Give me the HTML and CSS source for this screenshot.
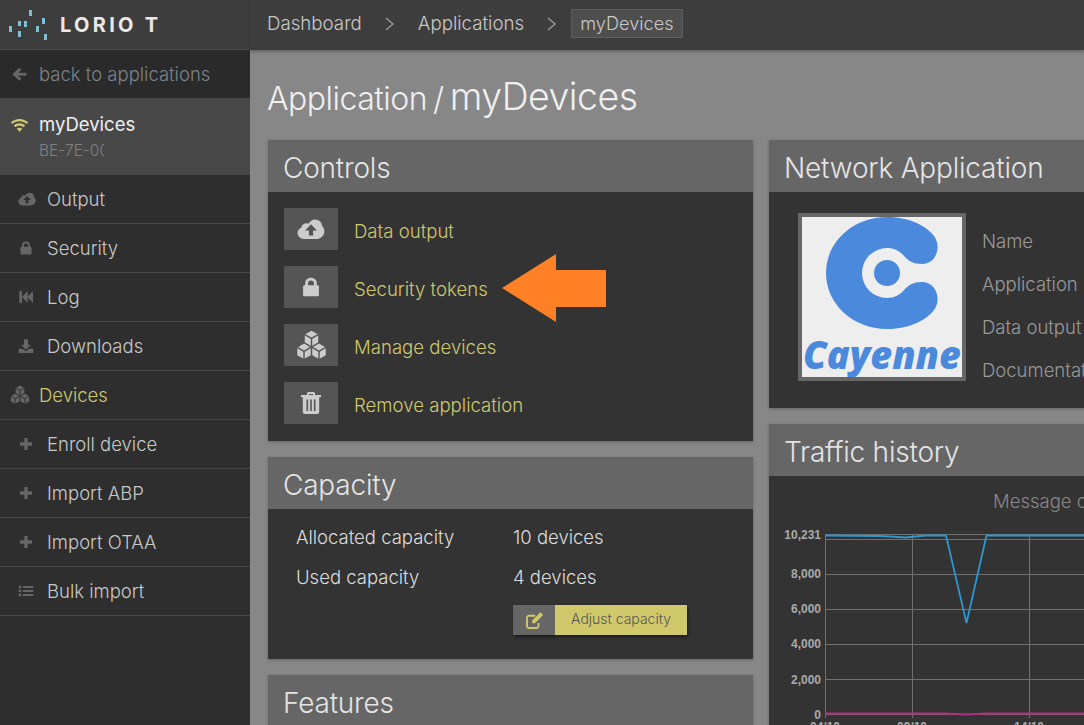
FILE: index.html
```html
<!DOCTYPE html>
<html>
	<head>
		<title>LORIOT - myDevices</title>
		<meta charset="utf-8" />
		<link rel="stylesheet" href="styles.css">
	</head>
<body>
	<svg class="defs" width="0" height="0">
		<symbol id="i-cloud" viewBox="0 0 24 24"><path fill-rule="evenodd" d="M6 20.500C3 20.500 .5 18.300 .5 15.500c0-2.200 1.300-4 3.300-4.800C4 8.500 5.800 7 8 7c.7 0 1.300.1 1.900.4C11 5.300 13.200 3.800 15.500 3.800c3.400 0 6 2.600 6.100 5.900 1.200.9 1.900 2.500 1.900 4.300 0 3.600-2.900 6.500-6.500 6.500H6zM12 8l-5 5.200h3.200v4.300h3.600v-4.300H17L12 8z"/></symbol>
		<symbol id="i-lock" viewBox="0 0 24 24"><path fill-rule="evenodd" d="M5 10V7.500C5 3.700 8 1 12 1s7 2.700 7 6.500V10h1a1.500 1.500 0 0 1 1.500 1.500v10A1.500 1.500 0 0 1 20 23H4a1.500 1.500 0 0 1-1.500-1.500v-10A1.500 1.500 0 0 1 4 10h1zm3.500 0h7V7.500C15.500 5.600 14 4.300 12 4.300S8.500 5.600 8.500 7.500V10z"/></symbol>
		<symbol id="i-back" viewBox="0 0 24 24"><path d="M2 3h4v18H2zM6 12l8.500-9v18zM14 12l8.500-9v18z"/></symbol>
		<symbol id="i-download" viewBox="0 0 24 24"><path d="M9 2h6v8h4.500L12 17.500 4.500 10H9zM1 16h6l5 4 5-4h6v6.500H1z"/></symbol>
		<symbol id="i-cubes" viewBox="0 0 24 24">
			<path d="M12 .5l5.200 3v6L12 12.500l-5.200-3v-6zM6.200 10.500l5.200 3v6l-5.200 3-5.200-3v-6zM17.800 10.500l5.200 3v6l-5.200 3-5.200-3v-6z"/>
			<path fill="none" stroke="var(--cube-line)" stroke-width="1.100" d="M6.800 3.500L12 6.500l5.200-3M12 6.500v6M1 13.500l5.200 3 5.200-3M6.200 16.500v6M12.600 13.500l5.200 3 5.200-3M17.800 16.500v6"/>
		</symbol>
		<symbol id="i-plus" viewBox="0 0 24 24"><path d="M9.500 3h5v6.500H21v5h-6.500V21h-5v-6.500H3v-5h6.500z"/></symbol>
		<symbol id="i-list" viewBox="0 0 24 24"><path d="M1 4h4v4H1zM7.500 4.500H23v3H7.500zM1 10h4v4H1zM7.500 10.500H23v3H7.500zM1 16h4v4H1zM7.500 16.500H23v3H7.500z"/></symbol>
		<symbol id="i-arrow" viewBox="0 0 24 24"><path d="M12.500 2.500l3 3L11 10h12v4.500H11l4.500 4.500-3 3L2 12.200z"/></symbol>
		<symbol id="i-wifi" viewBox="0 0 24 24"><path d="M12 5c4.300 0 8 1.600 11 4.300l-2.100 2.200C18.500 9.300 15.400 8 12 8s-6.500 1.300-8.900 3.500L1 9.300C4 6.600 7.700 5 12 5zM12 10.500c2.800 0 5.300 1 7.200 2.800l-2.100 2.100C15.700 14.200 13.900 13.500 12 13.500s-3.700.7-5.100 1.900l-2.100-2.100c1.900-1.800 4.400-2.800 7.200-2.800zM12 16c1.400 0 2.600.5 3.500 1.300L12 21l-3.500-3.700c.9-.8 2.100-1.300 3.500-1.300z"/></symbol>
		<symbol id="i-trash" viewBox="0 0 24 24"><path fill-rule="evenodd" d="M8 4V2.500A1.500 1.500 0 0 1 9.500 1h5A1.500 1.500 0 0 1 16 2.500V4h6v2.200h-1.800V21a2 2 0 0 1-2 2H5.800a2 2 0 0 1-2-2V6.200H2V4h6zm2 0h4V3h-4v1zM7.500 8.500v11.500h1.600V8.500H7.500zm3.700 0v11.500h1.600V8.500h-1.600zm3.700 0v11.500h1.600V8.500h-1.600z"/></symbol>
		<symbol id="i-edit" viewBox="0 0 24 24"><path fill="none" stroke="currentColor" stroke-width="2.400" d="M17 15v4a2.500 2.500 0 0 1-2.500 2.500H5A2.500 2.500 0 0 1 2.500 19V8.500A2.500 2.500 0 0 1 5 6h8"/><path d="M19.500 1.500l3.500 3.500-10.500 10.500H9V12z"/></symbol>
	</svg>

	<div id="app">
		<aside class="sidebar">
			<div class="brand">
				<svg class="brand-dots" width="46" height="32" viewBox="0 0 46 32">
					<rect x="0" y="17" width="3" height="6"/><rect x="9" y="12" width="3" height="5"/><rect x="15" y="12" width="3" height="6"/><rect x="9" y="22" width="3" height="6"/><rect x="20" y="1" width="3" height="6"/><rect x="27" y="17" width="3" height="6"/><rect x="33" y="9" width="3" height="6"/><rect x="35" y="25" width="3" height="6"/>
				</svg>
				<span class="brand-name">LORIO T</span>
			</div>
			<a class="back"><svg class="ico"><use href="#i-arrow"/></svg>back to applications</a>
			<div class="current">
				<div class="current-name"><svg class="ico"><use href="#i-wifi"/></svg>myDevices</div>
				<div class="current-eui">BE-7E-00</div>
			</div>
			<nav>
				<a class="nav-item"><svg class="ico wide"><use href="#i-cloud"/></svg>Output</a>
				<a class="nav-item"><svg class="ico small"><use href="#i-lock"/></svg>Security</a>
				<a class="nav-item"><svg class="ico"><use href="#i-back"/></svg>Log</a>
				<a class="nav-item"><svg class="ico"><use href="#i-download"/></svg>Downloads</a>
				<a class="nav-item section"><svg class="ico"><use href="#i-cubes"/></svg>Devices</a>
				<a class="nav-item"><svg class="ico"><use href="#i-plus"/></svg>Enroll device</a>
				<a class="nav-item"><svg class="ico"><use href="#i-plus"/></svg>Import ABP</a>
				<a class="nav-item"><svg class="ico"><use href="#i-plus"/></svg>Import OTAA</a>
				<a class="nav-item"><svg class="ico"><use href="#i-list"/></svg>Bulk import</a>
			</nav>
		</aside>

		<div class="page">
			<header class="topbar">
				<span>Dashboard</span>
				<svg class="crumb-sep" width="10" height="14" viewBox="0 0 10 14"><path d="M1 1l7 6-7 6"/></svg>
				<span>Applications</span>
				<svg class="crumb-sep" width="10" height="14" viewBox="0 0 10 14"><path d="M1 1l7 6-7 6"/></svg>
				<span class="crumb-now">myDevices</span>
			</header>
			<main class="content">
				<h1 class="title"><span class="title-small">Application</span><span class="title-small">/</span><span>myDevices</span></h1>
				<div class="columns">
					<div class="col">
						<section class="panel">
							<h2>Controls</h2>
							<div class="panel-body controls">
								<a class="control"><span class="control-ico"><svg class="ico cloud"><use href="#i-cloud"/></svg></span><span class="control-text">Data output</span></a>
								<a class="control"><span class="control-ico"><svg class="ico lock"><use href="#i-lock"/></svg></span><span class="control-text">Security tokens</span></a>
								<a class="control"><span class="control-ico"><svg class="ico cubes"><use href="#i-cubes"/></svg></span><span class="control-text">Manage devices</span></a>
								<a class="control"><span class="control-ico"><svg class="ico"><use href="#i-trash"/></svg></span><span class="control-text">Remove application</span></a>
								<svg class="callout" width="106" height="70" viewBox="0 0 106 70"><path d="M1 35L55 1v16h50v37H55v15z"/></svg>
							</div>
						</section>
						<section class="panel">
							<h2>Capacity</h2>
							<div class="panel-body capacity">
								<div class="cap-row"><span>Allocated capacity</span><span>10 devices</span></div>
								<div class="cap-row"><span>Used capacity</span><span>4 devices</span></div>
								<a class="btn"><span class="btn-ico"><svg class="ico"><use href="#i-edit"/></svg></span><span class="btn-text">Adjust capacity</span></a>
							</div>
						</section>
						<section class="panel">
							<h2>Features</h2>
						</section>
					</div>
					<div class="col">
						<section class="panel">
							<h2>Network Application</h2>
							<div class="panel-body netapp">
								<div class="logo">
									<svg width="160" height="160" viewBox="802 217 160 160">
										<path d="M887 217C906 217 925 224 934 236C942 247 936 264 922 264C913 264 909 261 905 257C900 251 894 248 887 248A25 25 0 0 0 887 298C894 298 900 295 905 289C909 285 913 282 922 282C936 282 942 299 934 310C925 322 906 329 887 329C853 329 826 304 826 273C826 242 853 217 887 217Z"/>
										<circle cx="887" cy="273" r="13"/>
										<text x="882" y="369" text-anchor="middle" textLength="158" lengthAdjust="spacingAndGlyphs">Cayenne</text>
									</svg>
								</div>
								<div class="net-labels">
									<div>Name</div>
									<div>Application EUI</div>
									<div>Data output</div>
									<div>Documentation</div>
								</div>
							</div>
						</section>
						<section class="panel">
							<h2>Traffic history</h2>
							<div class="panel-body traffic">
								<div class="chart-title">Message counts per day</div>
								<svg class="chart" width="315" height="226" viewBox="769 499 315 226">
									<g class="grid">
										<path d="M825 539.500H1084M825 574.500H1084M825 609.500H1084M825 644.500H1084M825 679.500H1084M825 714.500H1084M825 534.500H1084"/>
										<path d="M825.500 535V718M912.500 535V718M1029.500 535V718"/>
									</g>
									<polyline class="line-blue" points="825,535.500 880,536 906,537.500 925,535.500 946,535.500 966.500,623 986.500,535.500 1084,535.500"/>
									<polyline class="line-pink" points="825,713.500 946,713.500 966.500,714.500 986.500,713.500 1084,713.500"/>
									<g class="ylabels">
										<text x="821" y="539">10,231</text>
										<text x="821" y="578">8,000</text>
										<text x="821" y="613">6,000</text>
										<text x="821" y="648">4,000</text>
										<text x="821" y="684">2,000</text>
										<text x="821" y="719">0</text>
									</g>
									<g class="xlabels">
										<text x="825" y="731">04/10</text>
										<text x="912" y="731">09/10</text>
										<text x="1029" y="731">14/10</text>
									</g>
								</svg>
							</div>
						</section>
					</div>
				</div>
			</main>
		</div>
	</div>
</body>
</html>
```

FILE: styles.css
```css
:root {
	--yellow: #cfc96c;
	--side-bg: #2e2e2e;
	font-family: "Inter", "Liberation Sans", sans-serif;
	font-weight: 300;
}
html, body {
	margin: 0;
	height: 100%;
	overflow: hidden;
}
.defs {
	position: absolute;
}
.ico {
	fill: currentColor;
	flex: none;
}
#app {
	display: flex;
	height: 725px;
	width: 1084px;
	overflow: hidden;
}

/* sidebar */
.sidebar {
	--cube-line: #2e2e2e;
	width: 250px;
	flex: none;
	background-color: var(--side-bg);
	color: #c8c8c8;
	font-size: 18.500px;
}
.brand {
	height: 49px;
	background-color: #3d3d3d;
	border-bottom: 1px solid #4a4a4a;
	display: flex;
	align-items: center;
	padding-left: 9px;
}
.brand-dots {
	fill: #7cc0d2;
	flex: none;
}
.brand-name {
	margin-left: 5px;
	color: #e8e8e8;
	font-weight: 700;
	font-size: 20px;
	letter-spacing: 3.300px;
	white-space: pre;
}
.back {
	height: 48px;
	background-color: #2a2a2a;
	color: #7b8489;
	display: flex;
	align-items: center;
	padding-left: 11px;
	gap: 12px;
}
.back .ico {
	width: 16px;
	height: 16px;
	color: #666;
}
.current {
	height: 77px;
	background-color: #484848;
	box-sizing: border-box;
	padding: 15px 0 0 10px;
}
.current-name {
	display: flex;
	align-items: center;
	gap: 10px;
	color: #f0f0f0;
	font-weight: 400;
}
.current-name .ico {
	width: 19px;
	height: 19px;
	color: var(--yellow);
}
.current-eui {
	margin: 6px 0 0 29px;
	width: 65px;
	overflow: hidden;
	white-space: nowrap;
	color: #808080;
	font-size: 15.500px;
}
.nav-item {
	height: 48px;
	border-bottom: 1px solid #484848;
	display: flex;
	align-items: center;
	padding-left: 18px;
	gap: 13px;
}
.nav-item .ico {
	width: 16px;
	height: 16px;
	color: #666;
}
.nav-item .wide {
	width: 18px;
	height: 18px;
	margin-right: -2px;
}
.nav-item .small {
	width: 14px;
	height: 14px;
	margin: 0 1px;
}
.section {
	color: var(--yellow);
	padding-left: 10px;
	gap: 9px;
}
.section .ico {
	width: 20px;
	height: 20px;
}

/* main */
.page {
	flex: 1;
	min-width: 0;
	background-color: #878787;
}
.topbar {
	height: 50px;
	box-sizing: border-box;
	background-color: #3d3d3d;
	box-shadow: 0 2px 3px rgba(0,0,0,0.25);
	display: flex;
	align-items: center;
	padding: 0 0 3px 17px;
	color: #c8c8c8;
	font-size: 18.700px;
	gap: 23px;
}
.crumb-sep {
	fill: none;
	stroke: #999;
	stroke-width: 1.400;
}
.crumb-now {
	background-color: #4e4e4e;
	border: 1px solid #5c5c5c;
	font-size: 18.200px;
	line-height: 21px;
	padding: 3px 8px;
	margin-left: -9px;
}
.content {
	padding: 0 0 0 18px;
}
.title {
	margin: 0 0 0 -1px;
	height: 90px;
	display: flex;
	align-items: baseline;
	gap: 6px;
	line-height: 94px;
	font-size: 37.400px;
	font-weight: 300;
	color: #efefef;
	white-space: nowrap;
	letter-spacing: -0.500px;
}
.title-small {
	font-size: 32px;
}
.columns {
	display: flex;
	gap: 16px;
}
.col {
	width: 485px;
	flex: none;
	display: flex;
	flex-direction: column;
	gap: 16px;
}
.panel {
	background-color: #333;
	box-shadow: 0 1px 3px rgba(0,0,0,0.25);
}
.panel h2 {
	margin: 0;
	height: 52px;
	line-height: 56px;
	background-color: #666;
	color: #e4e4e4;
	font-size: 28px;
	font-weight: 300;
	letter-spacing: -0.200px;
	padding-left: 15px;
	white-space: nowrap;
}

/* controls */
.controls {
	--cube-line: #555;
	position: relative;
	padding: 16px 16px 17px;
	display: flex;
	flex-direction: column;
	gap: 16px;
}
.control {
	display: flex;
	align-items: center;
	gap: 16px;
	color: var(--yellow);
	font-size: 18.600px;
}
.control-text {
	padding-top: 4px;
}
.control-ico {
	width: 54px;
	height: 42px;
	background-color: #555;
	color: #ccc;
	display: flex;
	align-items: center;
	justify-content: center;
}
.control-ico .ico {
	width: 24px;
	height: 24px;
}
.control-ico .cloud {
	width: 28px;
	height: 28px;
}
.control-ico .lock {
	width: 20px;
	height: 20px;
}
.control-ico .cubes {
	width: 31px;
	height: 31px;
}
.callout {
	position: absolute;
	left: 233px;
	top: 61px;
	fill: #ff8025;
}

/* capacity */
.capacity {
	padding: 8px 0 24px 28px;
	color: #ddd;
	font-size: 18.500px;
}
.cap-row {
	display: flex;
	height: 40px;
	align-items: center;
}
.cap-row span:first-child {
	width: 217px;
}
.btn {
	display: flex;
	width: 174px;
	height: 30px;
	margin: 8px 0 0 217px;
	box-shadow: 1px 2px 3px rgba(0,0,0,0.5);
}
.btn-ico {
	width: 42px;
	background-color: #666;
	color: var(--yellow);
	display: flex;
	align-items: center;
	justify-content: center;
}
.btn-ico .ico {
	width: 19px;
	height: 19px;
}
.btn-text {
	flex: 1;
	background-color: var(--yellow);
	color: #555;
	font-size: 14px;
	line-height: 28px;
	text-align: center;
}

/* network application */
.netapp {
	height: 216px;
	display: flex;
	padding-left: 29px;
	box-sizing: border-box;
	padding-top: 21px;
}
.logo {
	width: 160px;
	height: 160px;
	border: 4px solid #666;
	background-color: #eee;
	flex: none;
}
.logo svg {
	display: block;
	fill: #4a89dc;
}
.logo text {
	font-family: "Open Sans", sans-serif;
	font-style: italic;
	font-weight: 800;
	font-size: 38px;
}
.net-labels {
	margin-left: 16px;
	padding-top: 7px;
	color: #999;
	font-size: 18.500px;
	white-space: nowrap;
}
.net-labels div {
	height: 43px;
	line-height: 43px;
}

/* traffic */
.traffic {
	height: 300px;
	position: relative;
	overflow: hidden;
}
.chart-title {
	padding: 14px 0 0 224px;
	color: #888;
	font-size: 18.500px;
	white-space: nowrap;
}
.chart {
	position: absolute;
	left: 0;
	top: 23px;
	font-family: "Liberation Sans", sans-serif;
}
.grid path {
	stroke: #707070;
	fill: none;
	stroke-width: 1;
}
.line-blue {
	fill: none;
	stroke: #2f96d0;
	stroke-width: 1.800;
}
.line-pink {
	fill: none;
	stroke: #b0307f;
	stroke-width: 1.800;
}
.ylabels text {
	fill: #aaa;
	font-size: 12px;
	font-weight: 700;
	text-anchor: end;
}
.xlabels text {
	fill: #aaa;
	font-size: 12px;
	font-weight: 700;
	text-anchor: middle;
}
```
